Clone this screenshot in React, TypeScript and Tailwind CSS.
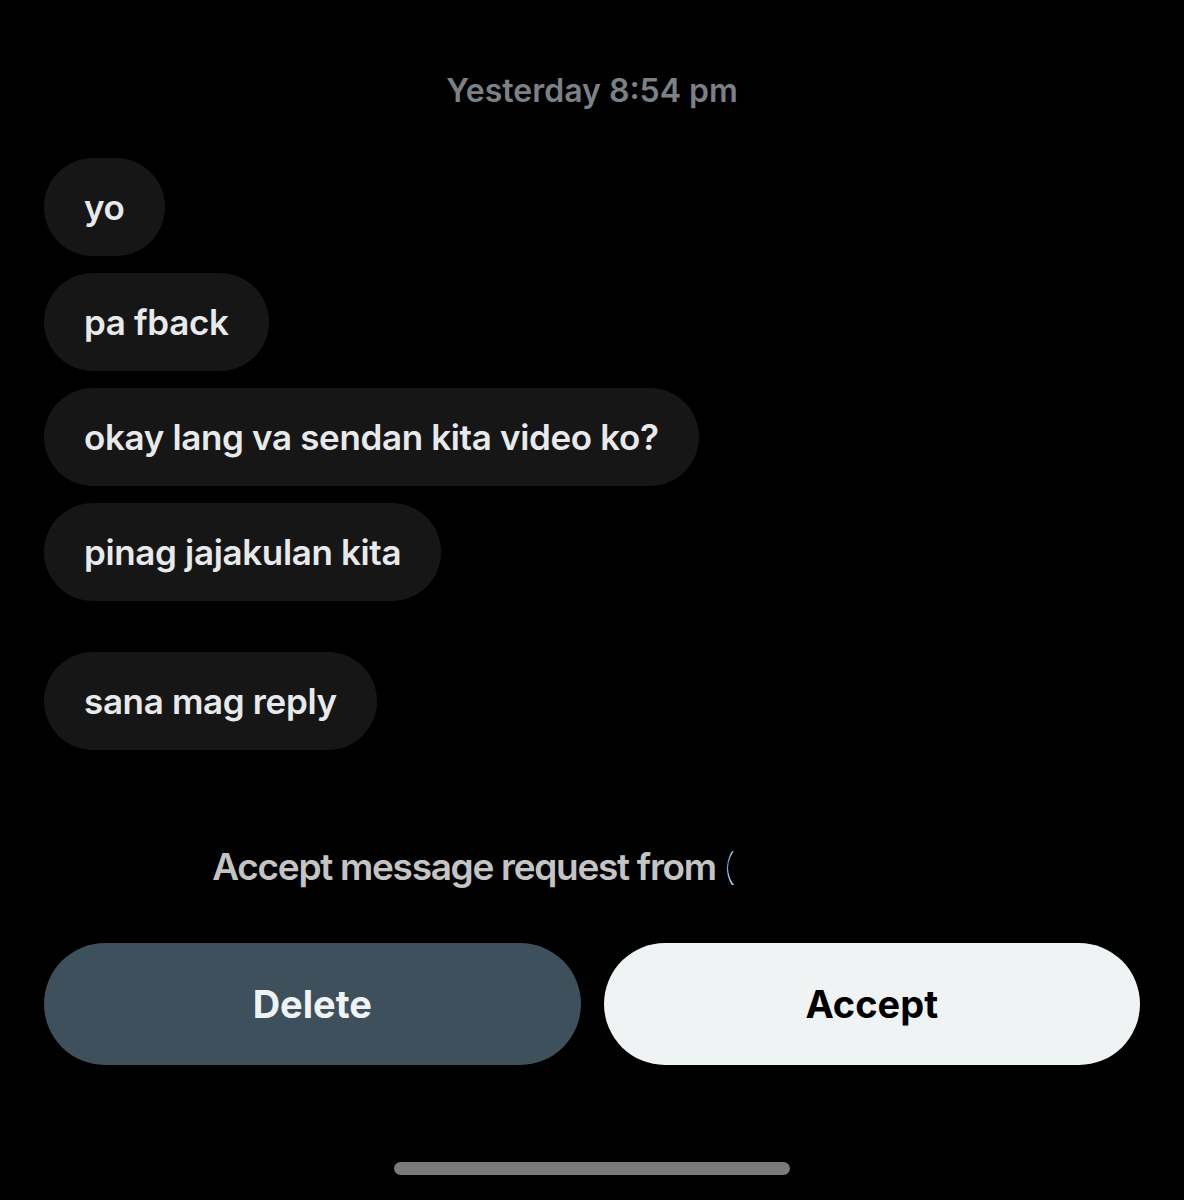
const messages = ['yo', 'pa fback', 'okay lang va sendan kita video ko?', 'pinag jajakulan kita']

function Bubble({ text }: { text: string }) {
  return (
    <div className="self-start flex h-[98px] items-center rounded-full bg-[#161616] px-[40px] text-[35px] font-semibold tracking-[-0.01em] text-[#e7e9ea]">
      {text}
    </div>
  )
}

export default function App() {
  return (
    <div
      className="flex h-[1200px] w-full flex-col bg-black px-[44px]"
      style={{ fontFamily: 'Inter, "Noto Sans", sans-serif' }}
    >
      {/* Timestamp */}
      <div className="mt-[70px] text-center text-[32px] font-semibold leading-[42px] text-[#7b8186]">
        Yesterday 8:54 pm
      </div>

      {/* Messages */}
      <div className="mt-[46px] flex flex-col gap-[17px]">
        {messages.map((m) => (
          <Bubble key={m} text={m} />
        ))}
      </div>
      <div className="mt-[51px] flex flex-col">
        <Bubble text="sana mag reply" />
      </div>

      {/* Request prompt, name scribbled out */}
      <div className="mt-[95px] flex justify-center pl-[42px]">
        <div className="whitespace-nowrap text-[37px] font-semibold leading-[44px] tracking-[-0.035em] text-[#c4c4c4]">
          Accept message request from{' '}
          <span className="relative inline-block w-[290px]">
            (
            <span className="absolute left-[4px] top-[-4px] h-[54px] w-[290px] rounded-[28px] bg-black" />
          </span>
        </div>
      </div>

      {/* Actions */}
      <div className="mt-[54px] grid grid-cols-2 gap-[23px]">
        <button className="h-[122px] rounded-full bg-[#3e505c] text-[38px] font-bold text-[#eff3f4]">Delete</button>
        <button className="h-[122px] rounded-full bg-[#eff3f4] text-[38px] font-bold text-black">Accept</button>
      </div>

      <div className="mt-auto mb-[25px] flex justify-center">
        <div className="h-[13px] w-[396px] rounded-full bg-[#7a7a7a]" />
      </div>
    </div>
  )
}
